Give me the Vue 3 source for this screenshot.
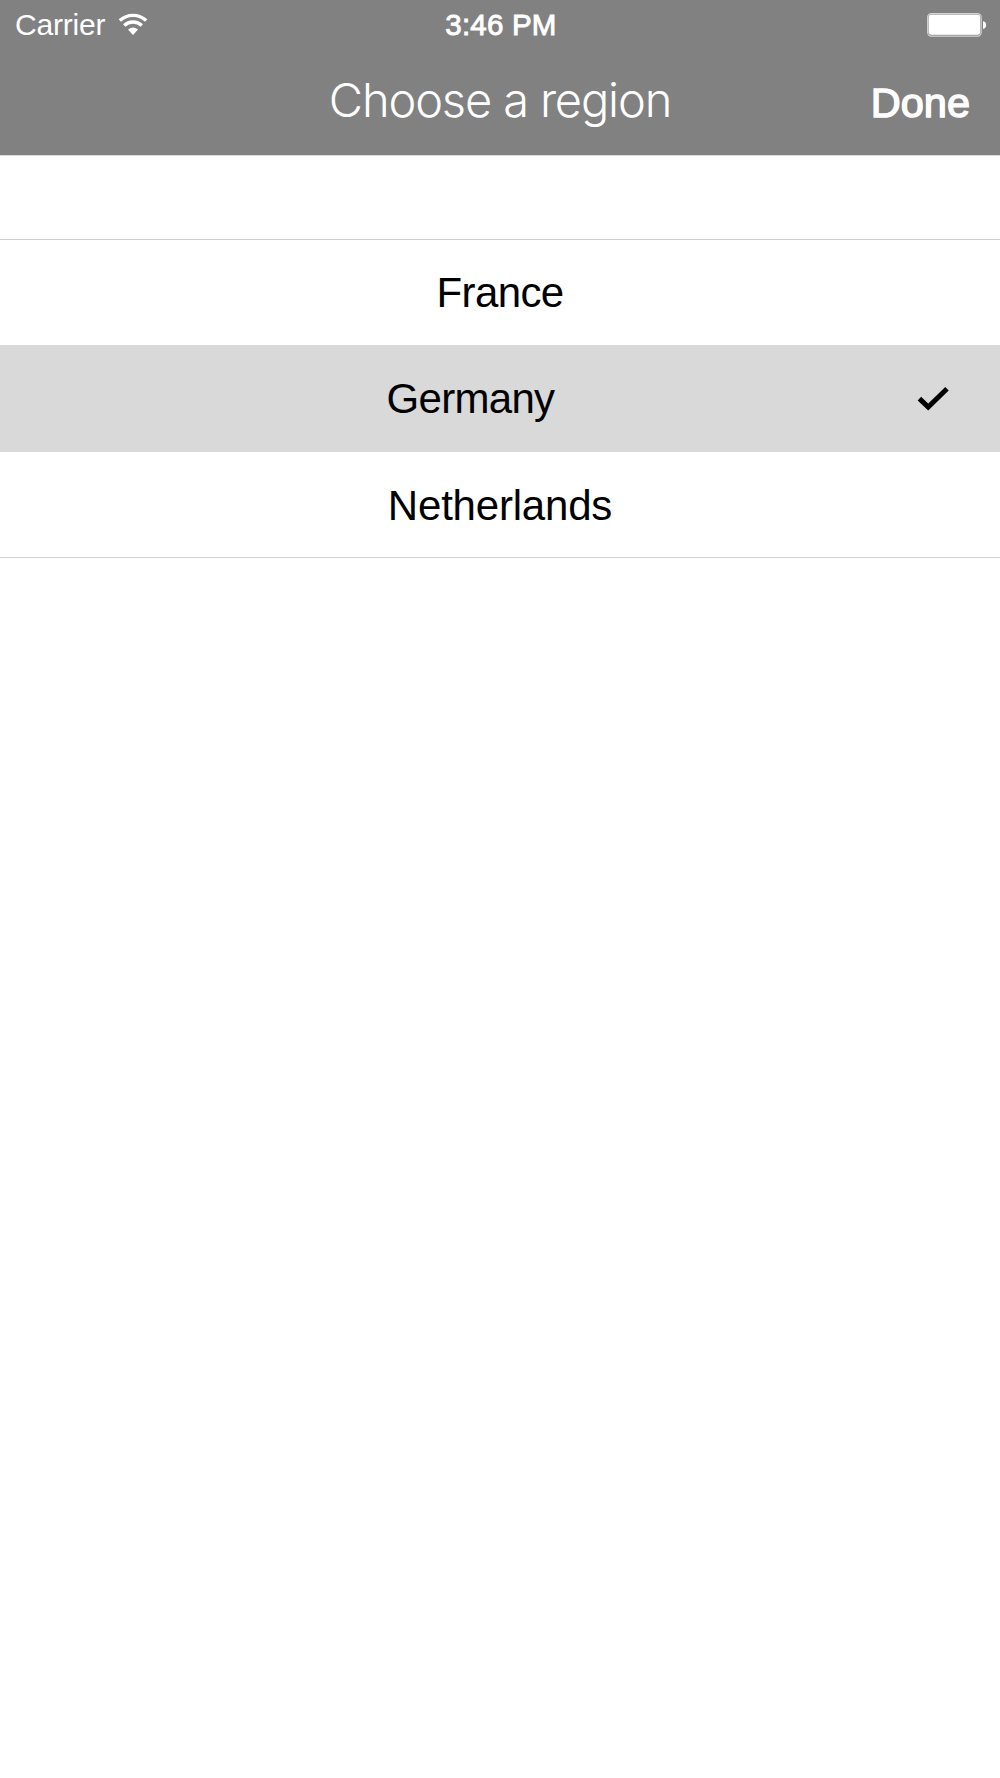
<script setup>
const regions = [
  { name: 'France', selected: false },
  { name: 'Germany', selected: true },
  { name: 'Netherlands', selected: false },
]
</script>

<template>
  <main class="screen">
    <header class="header">
      <div class="status">
        <div class="network">
          <span class="carrier">Carrier</span>
          <svg class="wifi" width="30" height="23" viewBox="0 0 30 23">
            <path d="M1.8 7.6 A19.4 19.4 0 0 1 28.2 7.6" />
            <path d="M6.2 12.4 A13 13 0 0 1 23.8 12.4" />
            <path class="dot" d="M10 16.6 Q15 12.4 20 16.6 L15 22 Z" />
          </svg>
        </div>
        <time class="time">3:46 PM</time>
        <svg class="battery" width="60" height="24" viewBox="0 0 60 24">
          <rect x="0.6" y="0.6" width="53.6" height="22.6" rx="3.6" fill="#9a9a9a" stroke="#d2d2d2" stroke-width="1.1" />
          <rect x="1.7" y="1.7" width="51.4" height="20" rx="2.4" fill="#fff" />
          <path d="M56 8 Q59.2 9 59.2 12 Q59.2 15 56 16 Z" fill="#fff" />
        </svg>
      </div>
      <nav class="navbar">
        <h1 class="title">Choose a region</h1>
        <button class="done" type="button">Done</button>
      </nav>
    </header>
    <ul class="list">
      <li v-for="region in regions" :key="region.name" class="row" :class="{ selected: region.selected }">
        <span class="name" :class="region.name.toLowerCase()">{{ region.name }}</span>
        <span v-if="region.selected" class="accessory">
          <svg width="32" height="26" viewBox="0 0 32 26">
            <path d="M2.4 12.6 L11.2 21 L30 2.8" fill="none" stroke="#000" stroke-width="5" />
          </svg>
        </span>
      </li>
    </ul>
  </main>
</template>

<style>
body {
  background: #fff;
}
</style>

<style scoped>
.screen {
  min-height: 1778px;
  background: #fff;
  font-family: "Liberation Sans", Arial, sans-serif;
  color: #000;
}
.header {
  box-sizing: border-box;
  height: 156px;
  background: #818181;
  border-bottom: 1px solid #d9d9d9;
  color: #fff;
}
.status {
  display: grid;
  grid-template-columns: 1fr auto 1fr;
  align-items: center;
  height: 50px;
  padding: 0 13px 0 15px;
}
.network {
  display: flex;
  align-items: center;
}
.carrier {
  font-size: 30px;
  line-height: 34px;
  letter-spacing: -0.2px;
}
.wifi {
  margin: -2px 0 0 13px;
  fill: none;
  stroke: #fff;
  stroke-width: 3.4;
}
.wifi .dot {
  fill: #fff;
  stroke: none;
}
.time {
  font-size: 29.5px;
  line-height: 34px;
  letter-spacing: 0.2px;
  -webkit-text-stroke: 0.9px #fff;
}
.battery {
  justify-self: end;
}
.navbar {
  display: grid;
  grid-template-columns: 1fr auto 1fr;
  align-items: baseline;
  padding: 21px 30px 0;
}
.title {
  grid-column: 2;
  margin: 0;
  font-family: Inter, sans-serif;
  font-size: 47px;
  font-weight: 300;
  line-height: 58px;
  letter-spacing: -1.15px;
}
.done {
  justify-self: end;
  padding: 0;
  border: 0;
  background: none;
  color: #fff;
  font-family: "Liberation Sans", Arial, sans-serif;
  font-size: 41.5px;
  letter-spacing: 0;
  -webkit-text-stroke: 1.4px #fff;
}
.list {
  margin: 83px 0 0;
  padding: 0;
  list-style: none;
  border-top: 1px solid #d0d0d0;
  border-bottom: 1px solid #d0d0d0;
}
.row {
  display: flex;
  align-items: center;
  height: 105px;
}
.row.selected {
  height: 107px;
  background: #d9d9d9;
}
.name {
  flex: 1;
  padding-top: 1px;
  text-align: center;
  font-size: 42px;
  line-height: 48px;
}
.france {
  letter-spacing: -0.6px;
}
.germany {
  padding: 0 0 0 24px;
  letter-spacing: -0.7px;
}
.netherlands {
  padding-top: 2px;
  letter-spacing: -0.2px;
}
.accessory {
  display: flex;
  width: 83px;
}
</style>
